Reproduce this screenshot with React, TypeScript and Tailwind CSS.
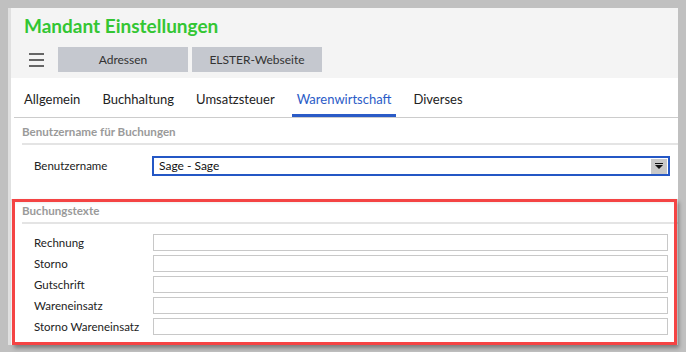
import React from 'react';

// Tabs in the settings dialog
const tabs = ['Allgemein', 'Buchhaltung', 'Umsatzsteuer', 'Warenwirtschaft', 'Diverses'];
const activeTab = 'Warenwirtschaft';

// Text fields for the booking texts
const bookingFields = ['Rechnung', 'Storno', 'Gutschrift', 'Wareneinsatz', 'Storno Wareneinsatz'];

const SectionTitle = ({ title }: { title: string }) => (
  <div className="ml-[11px] mr-0 border-b-2 border-[#e4e4e4] pb-[4px] text-[11.6px] font-bold leading-[14px] text-[#9a9a9a]">
    {title}
  </div>
);

const App = () => {
  return (
    <div
      className="relative h-[352px] w-[686px] overflow-hidden bg-[#c0c0c0] pl-2 pr-2 pt-2"
      style={{ fontFamily: 'Lato, "Open Sans", sans-serif' }}
    >
      <div className="flex h-[337px] flex-col border-l-[3px] border-[#e0e0e0] bg-white">
        {/* Header */}
        <div className="h-[70px] bg-[#f4f4f4] pl-[13px] pt-[5px]">
          <h1 className="text-[19px] font-bold leading-[26px] text-[#33c633]">Mandant Einstellungen</h1>
          <div className="mt-[8px] flex items-center">
            <div className="ml-[5px] mr-[14px] flex w-[15px] flex-col gap-[4px]">
              <span className="h-[2px] w-full bg-[#666]" />
              <span className="h-[2px] w-full bg-[#666]" />
              <span className="h-[2px] w-full bg-[#666]" />
            </div>
            <button className="h-[25px] w-[130px] bg-[#c5c8cf] text-[12px] text-[#333]">Adressen</button>
            <button className="ml-[4px] h-[25px] w-[130px] bg-[#c5c8cf] text-[12px] text-[#333]">ELSTER-Webseite</button>
          </div>
        </div>

        {/* Tabs */}
        <div className="ml-[3px] flex border-b border-[#cccccc] pl-[5px] pt-[12px]">
          {tabs.map((tab) => (
            <div
              key={tab}
              className={`mr-[12px] border-b-[3px] px-[5px] pb-[5px] text-[13px] leading-[19px] ${
                tab === activeTab ? 'border-[#2a5bc7] text-[#2a5bc7]' : 'border-transparent text-[#222]'
              }`}
            >
              {tab}
            </div>
          ))}
        </div>

        {/* Benutzername */}
        <div className="pt-[7px]">
          <SectionTitle title="Benutzername für Buchungen" />
          <div className="mt-[11px] flex items-center">
            <span className="w-[141px] pl-[23px] text-[11.5px] text-[#222]">Benutzername</span>
            <div className="flex h-[20px] w-[518px] items-center border-2 border-[#2457c5] bg-white">
              <span className="flex-1 pl-[5px] text-[12px] leading-[16px] text-[#111]">Sage - Sage</span>
              <span className="mr-[1px] flex h-[15px] w-[16px] items-center justify-center bg-[#c8c8c8]">
                <svg width="8" height="6" viewBox="0 0 8 6">
                  <rect x="0" y="0" width="8" height="1" fill="#111" />
                  <path d="M0 2 L8 2 L4 6 Z" fill="#111" />
                </svg>
              </span>
            </div>
          </div>
        </div>

        {/* Buchungstexte */}
        <div className="relative mt-[23px] flex-1">
          <div className="pt-[5px] shadow-[inset_0_4px_4px_-2px_rgba(0,0,0,0.18)]">
            <SectionTitle title="Buchungstexte" />
            <div className="mt-[10px] flex flex-col gap-[4px]">
              {bookingFields.map((field) => (
                <div key={field} className="flex items-center">
                  <span className="w-[142px] pl-[23px] text-[11.5px] leading-[17px] text-[#222]">{field}</span>
                  <input
                    type="text"
                    className="h-[17px] w-[515px] border border-[#c8c8c8] bg-white outline-none"
                  />
                </div>
              ))}
            </div>
          </div>
        </div>
      </div>

      {/* Red highlight frame */}
      <div className="pointer-events-none absolute left-[12px] top-[199px] h-[146px] w-[665px] border-[3px] border-[#f44444] shadow-[2px_3px_4px_rgba(0,0,0,0.35)]" />
    </div>
  );
};

export default App;
